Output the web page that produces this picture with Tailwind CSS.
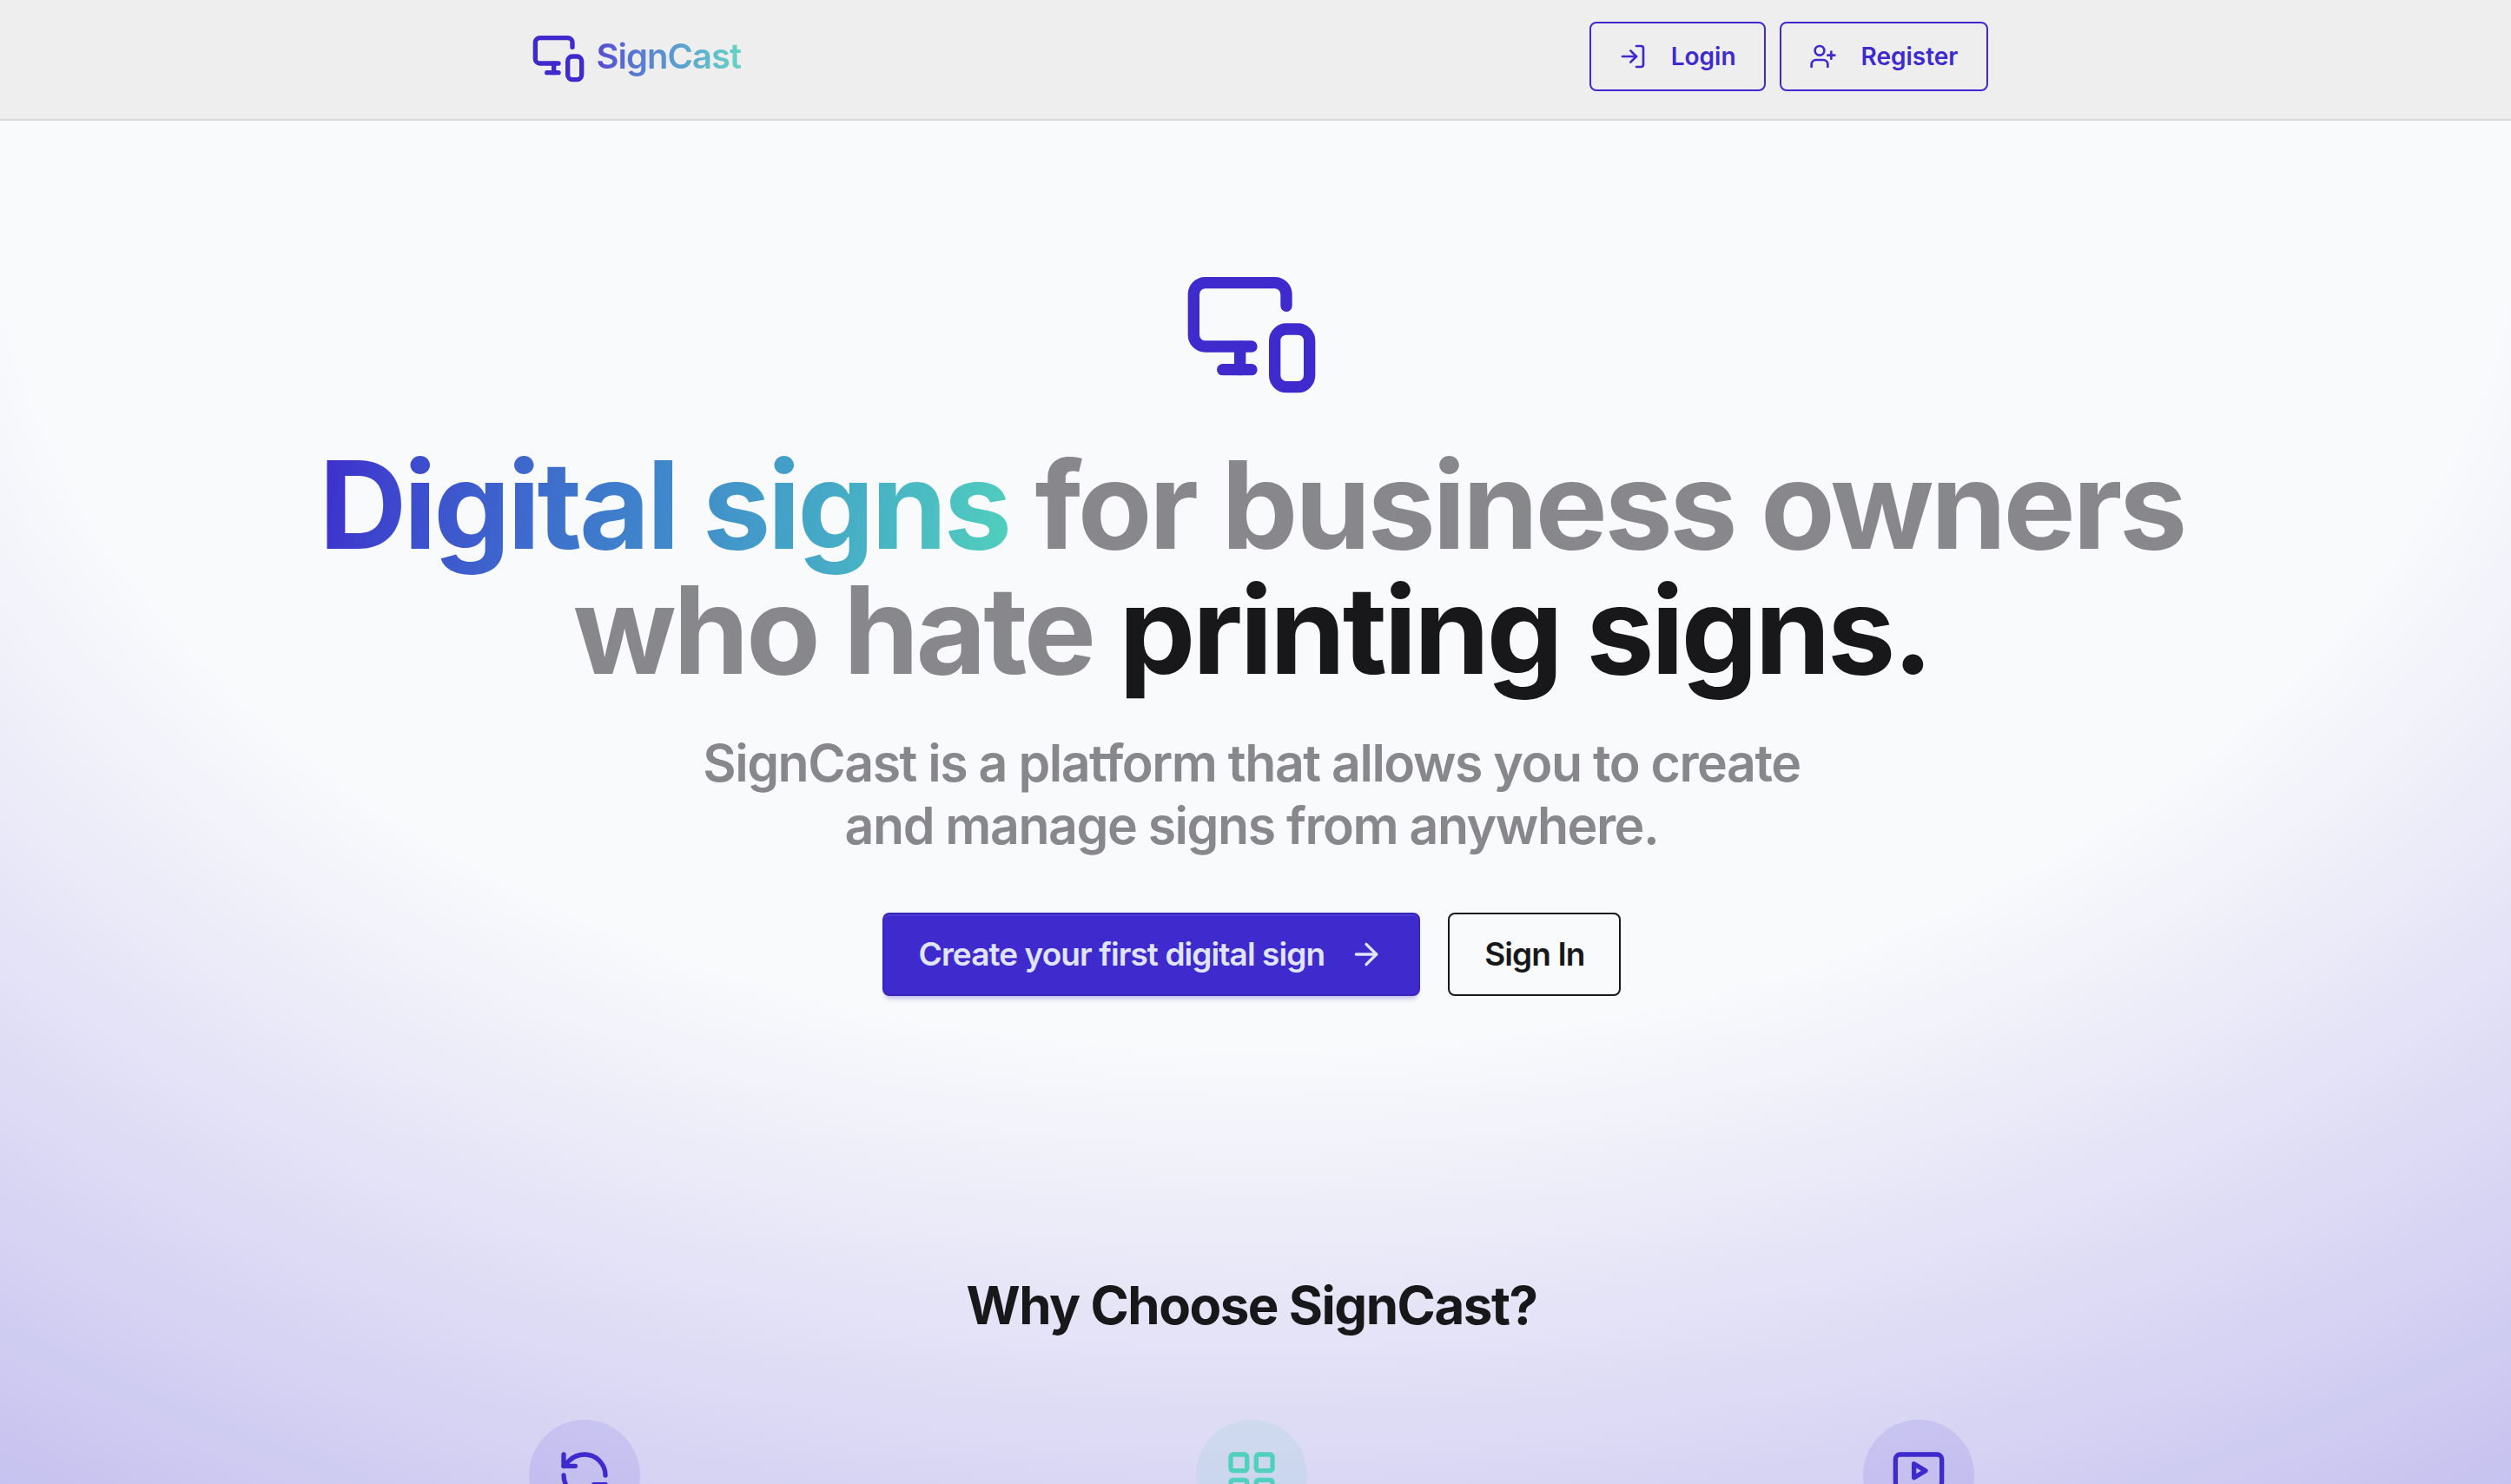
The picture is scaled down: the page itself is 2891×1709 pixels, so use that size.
<!DOCTYPE html>
<html lang="en">
<head>
<meta charset="utf-8">
<meta name="viewport" content="width=device-width, initial-scale=1">
<title>SignCast</title>
<script src="https://cdn.jsdelivr.net/npm/@tailwindcss/browser@4"></script>
</head>
<body class="min-h-screen bg-[#f9fafc] font-['Inter',sans-serif] text-[#18181b] antialiased">
<svg class="hidden" aria-hidden="true">
  <symbol id="devices" viewBox="0 0 24 24" fill="none" stroke="currentColor" stroke-width="2" stroke-linecap="round" stroke-linejoin="round">
    <path d="M18 8V6a2 2 0 0 0-2-2H4a2 2 0 0 0-2 2v7a2 2 0 0 0 2 2h8"/><path d="M10 19v-3.96 3.15"/><path d="M7 19h5"/><rect width="6" height="10" x="16" y="12" rx="2"/>
  </symbol>
</svg>
<header class="border-b-2 border-[#d8d8d8] bg-[#eeeeee]">
  <div class="mx-auto flex h-[137px] max-w-[1686px] items-start justify-between pt-[25px] pl-2">
    <a href="#" class="flex items-center gap-3 pt-2">
      <svg class="size-16 text-[#3e2acd]"><use href="#devices"/></svg>
      <span class="bg-linear-to-r from-[#3e2acd] to-[#51d0bd] bg-clip-text text-[40px] leading-[48px] font-semibold tracking-tight text-transparent opacity-85">SignCast</span>
    </a>
    <nav class="flex gap-4">
      <button class="flex h-20 items-center gap-7 rounded-lg border-2 border-[#3e2acd] px-8 text-[28px] font-semibold text-[#3e2acd]">
        <svg class="size-8" viewBox="0 0 24 24" fill="none" stroke="currentColor" stroke-width="2" stroke-linecap="round" stroke-linejoin="round"><path d="M15 3h4a2 2 0 0 1 2 2v14a2 2 0 0 1-2 2h-4"/><path d="m10 17 5-5-5-5"/><path d="M15 12H3"/></svg>
        Login
      </button>
      <button class="flex h-20 items-center gap-7 rounded-lg border-2 border-[#3e2acd] px-8 text-[28px] font-semibold text-[#3e2acd]">
        <svg class="size-8" viewBox="0 0 24 24" fill="none" stroke="currentColor" stroke-width="2" stroke-linecap="round" stroke-linejoin="round"><path d="M16 21v-2a4 4 0 0 0-4-4H6a4 4 0 0 0-4 4v2"/><circle cx="9" cy="7" r="4"/><path d="M19 8v6"/><path d="M22 11h-6"/></svg>
        Register
      </button>
    </nav>
  </div>
</header>
<main class="bg-[radial-gradient(125%_2512px_at_50%_62px,transparent_40%,rgb(62_42_205/0.5)_100%)] pr-[9px]">
  <section class="flex flex-col items-center pt-40 text-center">
    <svg class="size-40 text-[#3e2acd]"><use href="#devices"/></svg>
    <h1 class="mt-[50px] text-[140px] leading-[144px] font-bold tracking-tight text-[#88888c]"><span class="bg-linear-100 from-[#3e2acd] to-[#51d0bd] bg-clip-text text-transparent">Digital signs</span> for business owners<br>who hate <span class="text-[#18181b]">printing signs.</span></h1>
    <p class="mt-[46px] text-[59px] leading-[72px] font-semibold tracking-tight text-[#88888c]">SignCast is a platform that allows you to create<br>and manage signs from anywhere.</p>
    <div class="mt-16 flex gap-8">
      <button class="flex h-24 items-center gap-7 rounded-lg border-2 border-[#3825bb] bg-[#3e2acd] px-10 text-[37px] font-semibold tracking-tight text-[#e0e4fd] shadow-[inset_0_2px_0_rgb(255_255_255/0.08),0_6px_6px_-4px_rgb(62_42_205/0.4)]">
        Create your first digital sign
        <svg class="size-10" viewBox="0 0 24 24" fill="none" stroke="currentColor" stroke-width="2" stroke-linecap="round" stroke-linejoin="round"><path d="M5 12h14"/><path d="m12 5 7 7-7 7"/></svg>
      </button>
      <button class="h-24 rounded-lg border-2 border-[#18181b] px-10 text-[37px] font-semibold tracking-tight">Sign In</button>
    </div>
  </section>
  <section class="mx-auto max-w-[2304px] pt-80 pb-40">
    <h2 class="text-center text-[60px] leading-[72px] font-bold tracking-tight">Why Choose SignCast?</h2>
    <ul class="mt-24 grid grid-cols-3 justify-items-center">
      <li class="flex size-32 items-center justify-center rounded-full bg-[#3e2acd]/10 text-[#3e2acd]">
        <svg class="size-16" viewBox="0 0 24 24" fill="none" stroke="currentColor" stroke-width="2" stroke-linecap="round" stroke-linejoin="round"><path d="M21 12a9 9 0 0 0-9-9 9.75 9.75 0 0 0-6.74 2.74L3 8"/><path d="M3 3v5h5"/><path d="M3 12a9 9 0 0 0 9 9 9.75 9.75 0 0 0 6.74-2.74L21 16"/><path d="M16 16h5v5"/></svg>
      </li>
      <li class="flex size-32 items-center justify-center rounded-full bg-[#51d0bd]/10 text-[#51d0bd]">
        <svg class="size-16" viewBox="0 0 24 24" fill="none" stroke="currentColor" stroke-width="2" stroke-linecap="round" stroke-linejoin="round"><rect width="7" height="7" x="3" y="3" rx="1"/><rect width="7" height="7" x="14" y="3" rx="1"/><rect width="7" height="7" x="14" y="14" rx="1"/><rect width="7" height="7" x="3" y="14" rx="1"/></svg>
      </li>
      <li class="flex size-32 items-center justify-center rounded-full bg-[#3e2acd]/10 text-[#3e2acd]">
        <svg class="size-16" viewBox="0 0 24 24" fill="none" stroke="currentColor" stroke-width="2" stroke-linecap="round" stroke-linejoin="round"><path d="m10 7 5 3-5 3Z"/><rect width="20" height="14" x="2" y="3" rx="2"/><path d="M12 17v4"/><path d="M8 21h8"/></svg>
      </li>
    </ul>
  </section>
</main>
</body>
</html>
